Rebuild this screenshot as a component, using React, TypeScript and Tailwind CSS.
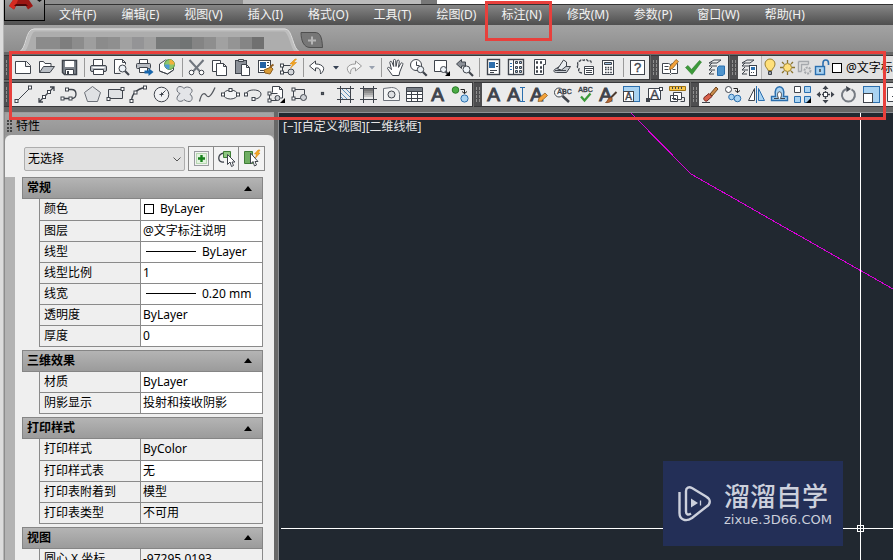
import type { ReactNode } from "react";

const INK = "#3f444c";
const BLUE = "#2b6fae";
const SKY = "#a9d3f2";

const Letter = ({ x = 10.5, y = 17, size = 19, children }: { x?: number; y?: number; size?: number; children: string }) => (
  <text
    x={x}
    y={y}
    fontSize={size}
    textAnchor="middle"
    fontFamily="'Liberation Sans', sans-serif"
    fill={INK}
    stroke={INK}
    strokeWidth={size > 14 ? 1 : 0.4}
  >
    {children}
  </text>
);

const Node = ({ x, y }: { x: number; y: number }) => (
  <rect x={x - 1.5} y={y - 1.5} width="3" height="3" fill="#fff" />
);

const Lens = ({ x, y, r = 3.5 }: { x: number; y: number; r?: number }) => (
  <>
    <path d={`M${x + r - 1} ${y + r - 1}l4 4`} strokeWidth="2.2" />
    <circle cx={x} cy={y} r={r} fill="#eef3f8" />
  </>
);

const Corner = () => <path d="M19 14v5h-5z" fill="#000" stroke="none" />;

const Layers = () => (
  <path d="M8 3h7l-4 3H3zM3 9l3-3M3 9h8M3 13l3-3M3 13h6M3 17l3-3M3 17h5" fill="none" />
);

const icons: Record<string, ReactNode> = {
  New: <path d="M2.500 4.500h11l4 4v8h-15zM12.500 4.500v5h5" fill="#fff" />,
  Open: (
    <>
      <path d="M3.500 15.500v-11h4l1.500 2h6v3" fill="#fff" />
      <path d="M3.500 15.500l4-6h11l-4.500 6z" fill="#b9bec5" />
    </>
  ),
  Save: (
    <>
      <path d="M3.500 3.500h14v14h-12l-2-2z" fill="#7e848c" strokeWidth="1.500" />
      <path d="M6 4h9v6H6z" fill="#fff" stroke="none" />
      <path d="M6.500 12.500h8v5h-8z" fill="#fff" />
      <path d="M8 14h2v3H8z" fill={INK} stroke="none" />
    </>
  ),
  Plot: (
    <>
      <path d="M5.500 8.500v-6h9v6" fill="#fff" />
      <rect x="2.500" y="8.500" width="16" height="6" rx="1.500" fill="#b9bdc3" />
      <path d="M5.500 12.500h10v5h-10z" fill="#fff" />
      <path d="M4.500 10.500h12" stroke="#fff" />
    </>
  ),
  Preview: (
    <>
      <path d="M3.500 16.500v-14h8l3 3v2M3.500 16.500h6M11.500 2.500v3h3" fill="#fff" />
      <Lens x={11.500} y={11.500} />
    </>
  ),
  Publish: (
    <>
      <path d="M5.500 6.500v-4h8v4" fill="#fff" />
      <rect x="2.500" y="6.500" width="14" height="5" rx="1" fill="#b9bdc3" />
      <path d="M5.500 10.500h8v5h-8z" fill="#fff" />
      <path d="M10.500 13.500h4v-2.500l5 4-5 4v-2.500h-4z" fill="#1665ab" stroke="none" />
    </>
  ),
  "3D DWF": (
    <>
      <path d="M2.500 7l6-4 8 2v8l-6 4-8-3z" fill="#fff" />
      <circle cx="12.500" cy="7.500" r="5" fill="#8fc66a" stroke="#57924a" />
      <path d="M12.500 2.500a5 5 0 0 1 5 5h-5z" fill="#f2b13b" stroke="none" />
      <path d="M7.500 7.500a5 5 0 0 0 5 5v-5z" fill="#4c9bd5" stroke="none" />
      <path d="M2.500 7v7l8 3 6-4v-2" fill="none" />
    </>
  ),
  Cut: (
    <>
      <path d="M3.500 3l10 11M17.500 3l-10 11" strokeWidth="2" stroke="#70767e" />
      <circle cx="5.500" cy="15.500" r="2.300" fill="#fff" />
      <circle cx="15.500" cy="15.500" r="2.300" fill="#fff" />
    </>
  ),
  Copy: (
    <>
      <path d="M3.500 3.500h8v11h-8z" fill="#fff" />
      <path d="M7.500 6.500h7l3 3v9h-10zM14.500 6.500v3h3" fill="#fff" />
    </>
  ),
  Paste: (
    <>
      <rect x="3.500" y="3.500" width="11" height="13" fill="#8b9098" />
      <path d="M6.500 2.500h5v2h-5z" fill="#d9dce0" />
      <path d="M9.500 7.500h5l3 3v8h-8zM14.500 7.500v3h3" fill="#fff" />
    </>
  ),
  "Match Properties": (
    <>
      <rect x="3.500" y="3.500" width="12" height="12" fill="#fff" />
      <path d="M5 5h6v6H5z" fill="#2362a5" stroke="none" />
      <path d="M12 5.500h2M12 8.500h2M5 13.500h4" />
      <path d="M9 13l7-3 2 2-3 5-5-1z" fill="#d99b35" stroke="#8f5f22" />
      <path d="M15 10l3.500-2.500" stroke="#8f5f22" strokeWidth="2" />
    </>
  ),
  "Block Editor": (
    <>
      <path d="M12.500 8.500h-8v7h8" fill="none" />
      <Node x={4} y={8.500} />
      <Node x={4} y={15.500} />
      <circle cx="13" cy="15" r="3" fill="#d4d7db" />
      <path d="M17 2l-5 5h3L12.500 11l6-5.500h-3l3-3.500z" fill="#f7a823" stroke="#d8860c" strokeWidth=".6" />
    </>
  ),
  Undo: <path d="M8.500 4l-6 5 6 5v-3c4-.5 5 1.500 5 6 6-5 3-10-5-10z" fill="#fff" />,
  Redo: <path d="M12.500 4l6 5-6 5v-3c-4-.5-5 1.500-5 6-6-5-3-10 5-10z" fill="#f5f5f5" stroke="#999" />,
  Pan: (
    <path
      d="M7.500 18.500L2.500 11.500c0-1.500 1.500-1.500 2.500-.3l1.500 1.500L4.800 5.500c0-1.500 1.800-1.500 2.200 0l1.700 4-.2-6c0-1.400 2-1.400 2.200 0l.3 6 1.200-5.500c.4-1.400 2.200-1 2.100.4l-.8 6 2.300-4c.8-1.200 2.500-.3 2 1l-3 7.500-.8 3.600z"
      fill="#fff"
    />
  ),
  "Zoom Realtime": (
    <>
      <circle cx="8" cy="8" r="5.500" fill="#fff" />
      <path d="M8.500 4.500v4h3" fill="none" />
      <Lens x={12.500} y={12.500} r={3.200} />
    </>
  ),
  "Zoom Window": (
    <>
      <path d="M3.500 3.500h12v11h-12z" fill="#fff" />
      <Lens x={12.500} y={12.500} r={3} />
      <Corner />
    </>
  ),
  "Zoom Previous": (
    <>
      <path d="M7.500 2.500l-5 4.500 5 4.500v-2.500h4v-4h-4z" fill="#8b9098" />
      <Lens x={12.500} y={12.500} r={3.500} />
    </>
  ),
  Properties: (
    <>
      <rect x="4.500" y="2.500" width="12" height="15" fill="#fff" strokeWidth="1.400" />
      <path d="M6 5h6v6H6z" fill="#2f6fad" stroke="none" />
      <path d="M13 6.500h2M13 9.500h2M7 13.500h7M7 15.500h4" />
    </>
  ),
  DesignCenter: (
    <>
      <rect x="2.500" y="2.500" width="15" height="15" fill="#fff" strokeWidth="1.400" />
      <path d="M7.500 3v14" />
      <path d="M4 6.500h2M4 9.500h2M4 12.500h2" stroke={BLUE} />
      <path d="M9.500 4.500h2v2h-2zM13.500 4.500h2v2h-2zM9.500 9.500h2v2h-2zM13.500 9.500h2v2h-2zM9.500 13.500h2v2h-2zM13.500 13.500h2v2h-2z" fill="#9fc3e2" />
    </>
  ),
  "Tool Palettes": (
    <>
      <path d="M5.500 2.500h11v5h-2v10h-9z" fill="#fff" />
      <path d="M7.500 4.500h1v2h-1zM11.500 4.500h1v2h-1zM7.500 9.500h1v2h-1zM11.500 9.500h1v2h-1zM7.500 13.500h1v2h-1zM11.500 13.500h1v2h-1z" fill="#ddd" />
    </>
  ),
  "Sheet Set": (
    <>
      <path d="M2.500 12.500l5-3h11l-4 6h-10c-3 0-3-2-2-3z" fill="#c9cdd2" />
      <path d="M5.500 12l6-9 3 2v4l-5 4z" fill="#e9ecef" />
      <path d="M3 13.500h11" />
    </>
  ),
  Markup: (
    <>
      <path
        d="M3 8c-1-2 0-4 2-4 1-2 3-1 4-.5 1-1.500 3-1 4 .5 2-1 4 .5 3 3M3 8c-1.500 2 0 4 1 4-1 2 0 4 3 4"
        fill="none"
        strokeDasharray="3 1"
        strokeWidth="1.300"
      />
      <path d="M9.500 9.500h9v8h-9z" fill="#fff" />
      <path d="M9.500 11.500h9M11 13.500h6M11 15.500h6" />
    </>
  ),
  QuickCalc: (
    <>
      <rect x="4.500" y="3.500" width="11" height="14" fill="#fff" />
      <path d="M6.500 5.500h7v2h-7z" fill="#9fc3e2" />
      <path d="M7 10.500h7M7 12.500h7M7 15.500h7" strokeDasharray="1.600 1" strokeWidth="1.300" />
    </>
  ),
  Help: (
    <>
      <rect x="3.500" y="3.500" width="14" height="14" fill="#fff" />
      <Letter y={15} size={13}>?</Letter>
    </>
  ),
  "Block Attributes": (
    <>
      <path d="M2.500 6.500h6l2 1 2-1h5v10h-6l-1 1-1-1h-7zM10.500 8v8M4.500 9.500h4M4.500 12.500h4M12.500 12.500h3" fill="#fff" />
      <path d="M10 9.500l6-7 2.500 2-6 7-3 1z" fill="#f5a33a" stroke="#8f5f22" strokeWidth=".8" />
    </>
  ),
  Apply: <path d="M2.500 10.500L5 8.500l3.500 4L16.500 3.500l2 1.500L9 17.500z" fill="#3c9a3a" stroke="#2b7a2b" strokeWidth=".6" />,
  "Layer States": (
    <>
      <Layers />
      <path d="M11.500 10.500l1.500-1.500h5.500v8l-1.500 1.500h-5.500z" fill="#4e94cd" stroke={BLUE} />
    </>
  ),
  "Layer Manager": (
    <>
      <Layers />
      <rect x="10.500" y="8.500" width="7" height="10" fill="#fff" />
      <path d="M12 10h4v3h-4z" fill={BLUE} stroke="none" />
      <path d="M12 15.500h4" strokeDasharray="1 1" />
    </>
  ),
  Line: (
    <>
      <path d="M4 17L17 4" />
      <Node x={3.500} y={17} />
      <Node x={17} y={3.500} />
    </>
  ),
  "Construction Line": (
    <>
      <path d="M3 18L18 3M14 3h4v4M3 14v4h4" fill="none" strokeWidth="1.300" />
      <Node x={8} y={13} />
      <Node x={13} y={8} />
    </>
  ),
  Polyline: (
    <>
      <path d="M3.500 14.500h9c6 0 6-9 0-9H9" fill="none" strokeWidth="1.300" />
      <Node x={3.500} y={14.500} />
      <Node x={11.500} y={14.500} />
      <Node x={8} y={5.500} />
    </>
  ),
  Polygon: <path d="M10.500 2.500l8 6-3 9h-10l-3-9z" fill="#dfe1e4" stroke="#6b7078" />,
  Rectangle: (
    <>
      <path d="M3.500 5.500h14v9h-14z" fill="#dfe1e4" />
      <Node x={3.500} y={15} />
      <Node x={17.500} y={5} />
    </>
  ),
  Arc: (
    <>
      <path d="M3.500 17C4 9 9 5 17 3.500" fill="none" strokeWidth="1.300" />
      <Node x={3.500} y={17} />
      <Node x={7.500} y={8.500} />
      <Node x={17} y={3.500} />
    </>
  ),
  Circle: (
    <>
      <circle cx="10.500" cy="10.500" r="7.300" fill="#f1f2f4" />
      <path d="M10.500 10.500l4-4M8.500 10.500h4M10.500 8.500v4" />
    </>
  ),
  "Revision Cloud": (
    <path
      d="M6 9.500c-4-1-4-7 0-7 2 0 3 1 4 2 2-3 9-1 8 3-1 2-2 2-2 3 3 1 3 7-1 7-2 0-4-1-5-2-2 3-7 2-7-1 0-2 1-3 3-5z"
      fill="#e3e5e8"
      stroke="#6b7078"
    />
  ),
  Spline: <path d="M2.500 17.500c2-9 5-9 7-6s5 0 8.500-8" fill="none" stroke="#55595f" strokeWidth="1.300" />,
  Ellipse: (
    <>
      <ellipse cx="10.500" cy="10.500" rx="7" ry="4.500" fill="#f3f4f5" />
      <Node x={3} y={10.500} />
      <Node x={18} y={10.500} />
      <Node x={10.500} y={6} />
    </>
  ),
  "Ellipse Arc": (
    <>
      <path d="M3 10.500c0-6 15-6 15-.5 0 3-3 5-7 5" fill="none" />
      <Node x={3} y={10.500} />
      <Node x={10.500} y={15} />
    </>
  ),
  "Insert Block": (
    <>
      <path d="M6.500 8.500v-6h7l3 3V14h-2M13.500 2.500v3h3" fill="#fff" />
      <path d="M11.500 9.500h-8v7h8" fill="none" />
      <Node x={3.500} y={9.500} />
      <Node x={3.500} y={16.500} />
      <circle cx="11.500" cy="14" r="2.500" fill="#cfd2d6" />
      <Corner />
    </>
  ),
  "Make Block": (
    <>
      <path d="M15.500 10.500v-5h-11v9h7" fill="none" />
      <Node x={4.500} y={5.500} />
      <Node x={4.500} y={14.500} />
      <circle cx="14.500" cy="13.500" r="3" fill="#cfd2d6" />
    </>
  ),
  Point: <rect x="9.500" y="8.500" width="2" height="2" fill="#fff" strokeWidth="1.200" />,
  Hatch: (
    <>
      <path d="M5.500 2v17M15.500 2v17M2 4.500h17M2 15.500h17" />
      <path d="M6 9l6 6M6 13l2 2M7 5l8 8M11 5l4 4" stroke="#4e88b5" strokeWidth=".9" />
    </>
  ),
  Gradient: (
    <>
      <path d="M6 5h9v2H6z" fill="#777" stroke="none" />
      <path d="M6 7h9v2H6z" fill="#8e8e8e" stroke="none" />
      <path d="M6 9h9v2H6z" fill="#a8a8a8" stroke="none" />
      <path d="M6 11h9v2H6z" fill="#c4c4c4" stroke="none" />
      <path d="M5.500 2v17M15.500 2v17M2 4.500h17M2 15.500h17" fill="none" />
    </>
  ),
  Region: (
    <>
      <path d="M2.500 4.500l8-1c5 0 8 3 8 7v6h-16z" fill="#f3f4f5" stroke="#6b7078" />
      <circle cx="10.500" cy="10.500" r="3.500" fill="#dfe1e4" />
    </>
  ),
  Table: (
    <>
      <path d="M2.500 3.500h16v14h-16z" fill="#fff" />
      <path d="M3 4h15v3H3z" fill="#777d85" stroke="none" />
      <path d="M2.500 7.500h16M2.500 10.500h16M2.500 14.500h16M7.500 7v10M13.500 7v10" />
    </>
  ),
  "Multiline Text": <Letter>A</Letter>,
  "Add Selected": (
    <>
      <circle cx="5.500" cy="6" r="3.300" fill="#4bab45" stroke="#2a7d28" />
      <circle cx="14.500" cy="14.500" r="3.600" fill={SKY} stroke={BLUE} />
      <path d="M10.500 5.500h4v4M12 7.500l2.500 2 2.500-2" fill="none" stroke="#222" />
    </>
  ),
  "Single Line Text": (
    <>
      <Letter x={7.500}>A</Letter>
      <path d="M14 3.500h5M14 17.500h5M16.500 3.500v14" stroke={BLUE} />
    </>
  ),
  "Edit Text": (
    <>
      <Letter x={7.500}>A</Letter>
      <path d="M9 17.500l1-3.500 6-5 2.500 2.500-6 5.500z" fill="#f5a33a" stroke="#8f5f22" strokeWidth=".8" />
    </>
  ),
  "Find Text": (
    <>
      <circle cx="7" cy="8.500" r="4.500" fill="#f5f7f9" />
      <path d="M10.500 12l6.500 6" strokeWidth="2.500" />
      <Letter x={12.500} y={10} size={7}>ABC</Letter>
    </>
  ),
  "Spell Check": (
    <>
      <Letter y={8} size={7}>ABC</Letter>
      <path d="M6 12.500l3.500 4 6-7" fill="none" stroke="#3c9a3a" strokeWidth="2.300" />
    </>
  ),
  "Text Style": (
    <>
      <Letter x={7.500}>A</Letter>
      <path d="M12.500 14l6-6" strokeWidth="2" stroke="#4c3b30" />
      <path d="M7.500 18.500c2 0 2-5 5.500-5 3 1 0 6-5.500 5z" fill="#b86b36" stroke="#7b4420" strokeWidth=".8" />
    </>
  ),
  "Scale Text": (
    <>
      <rect x="2.500" y="2.500" width="16" height="15" fill={SKY} stroke={BLUE} />
      <rect x="2.500" y="7.500" width="10" height="10" fill="#fff" />
      <Letter x={7.500} y={16} size={10}>A</Letter>
    </>
  ),
  "Justify Text": (
    <>
      <path d="M4.500 4.500h12v11h-12z" fill="#fff" />
      <Letter y={15} size={13}>A</Letter>
      <Node x={17} y={5} />
      <path d="M2 14h4v4H2z" fill={INK} stroke="none" />
    </>
  ),
  "Convert Space": (
    <>
      <path d="M2.500 2.500h16v4h-16z" fill="#f7c64b" stroke="#a07311" />
      <path d="M5.500 3v2M8.500 3v2M11.500 3v2M14.500 3v2" />
      <path d="M6.500 8.500h8v7h-8zM3.500 11.500h7v6h-7z" fill="#fff" />
      <path d="M5 14.500h4M14.500 13.500h3v4h-4" fill="none" />
    </>
  ),
  Erase: (
    <>
      <path d="M10 10l6-7 2 2-6 7z" fill="#c98a4a" stroke="#70451d" />
      <path d="M4 13.500l5-4 3 3-5 4.500c-2 1-4-2-3-3.500z" fill="#d75f4a" stroke="#70251d" />
      <path d="M2 18.500h8" />
    </>
  ),
  "Copy Object": (
    <>
      <circle cx="5.500" cy="5.500" r="3" fill="#fff" />
      <circle cx="8.500" cy="13" r="2.800" fill={SKY} stroke={BLUE} />
      <circle cx="14.500" cy="14.500" r="3.300" fill={SKY} stroke={BLUE} />
      <path d="M10.500 4.500h4v4M12 6.500l2.500 2 2.500-2" fill="none" stroke="#222" />
    </>
  ),
  Mirror: (
    <>
      <path d="M8.500 4.500v12h-6z" fill="#fff" />
      <path d="M12.500 4.500v12h6z" fill={SKY} stroke={BLUE} />
      <path d="M10.500 2v17" stroke={BLUE} />
    </>
  ),
  Offset: (
    <>
      <path d="M2.500 16.500v-4h4c-3-13 11-13 8 0h4v4z" fill={SKY} stroke={BLUE} strokeWidth="1.400" />
      <path d="M5 14.500h4.500c-4-9 6-9 2 0H16" fill="#fff" />
    </>
  ),
  Array: (
    <>
      <path d="M2.500 2.500h6v6h-6z" fill="#fff" />
      <path d="M12.500 2.500h6v6h-6zM2.500 12.500h6v6h-6zM12.500 12.500h6v6h-6z" fill={SKY} stroke={BLUE} />
      <Corner />
    </>
  ),
  Move: (
    <>
      <path d="M10.500 4v13M4 10.500h13" strokeDasharray="2 1" strokeWidth="1.500" />
      <path d="M10.500 1.500l3 3.500h-6zM10.500 19.500l3-3.500h-6zM1.500 10.500l3.500-3v6zM19.500 10.500l-3.500-3v6z" fill={INK} stroke="none" />
      <rect x="8.500" y="8.500" width="4" height="4" fill="#fff" />
    </>
  ),
  Rotate: (
    <>
      <path d="M8 5a6.500 6.500 0 1 0 5.500.3" fill="none" stroke="#767b82" strokeWidth="2" />
      <path d="M8 2l5 3-4.500 3z" fill={INK} stroke="none" />
    </>
  ),
  Scale: (
    <>
      <rect x="2.500" y="2.500" width="16" height="16" fill={SKY} stroke={BLUE} />
      <rect x="2.500" y="9.500" width="9" height="9" fill="#fff" />
    </>
  ),
  Stretch: <path d="M3.500 3.500h13v14h-13zM8 12.500h8" fill="#fff" />,
  "Layer On": (
    <>
      <path d="M8 13.500c0-2-3-3-3-6.500a5 5 0 0 1 10 0c0 3.500-3 4.500-3 6.500z" fill="#ffe07a" stroke="#9c8030" />
      <path d="M8.500 14.500h3v3h-3z" fill="#9aa0a8" />
    </>
  ),
  Thaw: (
    <>
      <path
        d="M10.500 3v3M10.500 15v3M3 10.500h3M15 10.500h3M5 5l2 2M14 14l2 2M5 16l2-2M14 7l2-2"
        stroke="#8b7530"
        strokeWidth="1.300"
      />
      <circle cx="10.500" cy="10.500" r="4" fill="#ffe07a" stroke="#9c8030" />
    </>
  ),
  "Viewport Freeze": (
    <>
      <path d="M4.500 4.500h10v3M4.500 4.500v10h3M7.500 14.500v-7h7" fill="none" stroke="#a5a8ac" strokeWidth="1.400" />
      <circle cx="13.500" cy="13.500" r="3" fill="#ddd" stroke="#a5a8ac" strokeDasharray="2 1" strokeWidth="2" />
    </>
  ),
  Unlock: (
    <>
      <path d="M12 9.500V6c0-4 5.500-4 5.500 0v2" fill="none" stroke={BLUE} strokeWidth="1.600" />
      <rect x="4.500" y="9.500" width="9" height="8" fill={SKY} stroke={BLUE} strokeWidth="1.400" />
      <path d="M9 12v3" strokeWidth="1.500" />
    </>
  ),
  "Toggle PickAdd": (
    <>
      <rect x="3.500" y="3.500" width="14" height="14" fill="none" strokeDasharray="1 1" />
      <path d="M5.500 5.500h10v10h-10z" fill="#e2f3df" stroke="#83bb7b" strokeDasharray="1 1" />
      <path d="M10.500 7v7M7 10.500h7" stroke="#16811b" strokeWidth="2.400" />
    </>
  ),
  "Select Objects": (
    <>
      <path d="M8 5c-7 1-7 10 0 9" fill="none" strokeWidth="1.300" />
      <path d="M7.500 3.500h7v6h-7z" fill="#8dc67f" stroke="#3e7d35" />
      <path d="M11.500 6.500v10l2.500-2.500 1.500 4.500 2-1-1.500-3.500h3z" fill="#fff" />
    </>
  ),
  "Quick Select": (
    <>
      <path d="M3.500 3.500h8v12h-8z" fill="#6fae62" stroke="#3e7d35" />
      <path d="M9.500 5v11l2.500-2.500 1.500 4.500 2-1-1.500-3.500h3z" fill="#fff" />
      <path d="M17 2l-3.500 4h2l-1 4 4.500-5h-2l2-3z" fill="#f7a823" stroke="#d8860c" strokeWidth=".6" />
    </>
  ),
};

const Icon = ({ name }: { name: string }) => (
  <svg viewBox="1 1 19 19" className="size-[19px] shrink-0 overflow-visible" stroke={INK} aria-hidden="true">
    {icons[name]}
  </svg>
);

const Tool = ({ name }: { name: string }) => (
  <button aria-label={name} className="flex w-[23px] shrink-0 items-center justify-center hover:bg-sky-100">
    <Icon name={name} />
  </button>
);

const Drop = ({ name, muted }: { name: string; muted?: boolean }) => (
  <button aria-label={name} className="flex w-[13px] shrink-0 items-center justify-center">
    <svg viewBox="0 0 6 4" className={muted ? "h-1 w-1.5 text-gray-400" : "h-1 w-1.5 text-gray-700"}>
      <path d="M0 0h6L3 3.500z" fill="currentColor" />
    </svg>
  </button>
);

const Separator = () => (
  <div className="flex w-[6px] shrink-0 justify-center py-0.5">
    <div className="w-px bg-[#9a9a9a]" />
  </div>
);

const Grip = () => (
  <div className="flex w-2 shrink-0 items-center justify-center gap-0.5 bg-[#4e4e50] py-1">
    <div className="h-full border-l border-dashed border-[#8f8f8f]" />
    <div className="h-full border-l border-dashed border-[#8f8f8f]" />
  </div>
);

const Toolbar = ({ items, grow, children }: { items: string[]; grow?: boolean; children?: ReactNode }) => (
  <div
    className={
      grow
        ? "flex min-w-0 flex-1 border-y border-[#38383a] bg-[#ebebeb]"
        : "flex shrink-0 border border-l-0 border-[#38383a] bg-[#ebebeb]"
    }
  >
    <Grip />
    {items.map((item, i) => {
      if (item === "|") return <Separator key={i} />;
      if (item === "v") return <Drop key={i} name={items[i - 1] + " list"} muted={items[i - 1] === "Redo"} />;
      return <Tool key={i} name={item} />;
    })}
    {children}
  </div>
);

const standard = [
  "New", "Open", "Save", "|", "Plot", "Preview", "Publish", "3D DWF", "|",
  "Cut", "Copy", "Paste", "Match Properties", "Block Editor", "|",
  "Undo", "v", "Redo", "v", "|",
  "Pan", "Zoom Realtime", "Zoom Window", "Zoom Previous", "|",
  "Properties", "DesignCenter", "Tool Palettes", "Sheet Set", "Markup", "QuickCalc", "|", "Help",
];

const draw = [
  "Line", "Construction Line", "Polyline", "Polygon", "Rectangle", "Arc", "Circle",
  "Revision Cloud", "Spline", "Ellipse", "Ellipse Arc", "Insert Block", "Make Block", "Point",
  "Hatch", "Gradient", "Region", "Table", "Multiline Text", "Add Selected",
];

const text = [
  "Multiline Text", "Single Line Text", "Edit Text", "Find Text", "Spell Check",
  "Text Style", "Scale Text", "Justify Text", "Convert Space",
];

const modify = ["Erase", "Copy Object", "Mirror", "Offset", "Array", "Move", "Rotate", "Scale", "Stretch"];

const menus = [
  "文件(F)", "编辑(E)", "视图(V)", "插入(I)", "格式(O)", "工具(T)",
  "绘图(D)", "标注(N)", "修改(M)", "参数(P)", "窗口(W)", "帮助(H)",
];

type Row = { label: string; value: string; kind?: "color" | "line" | "readonly" };

const sections: { title: string; rows: Row[] }[] = [
  {
    title: "常规",
    rows: [
      { label: "颜色", value: "ByLayer", kind: "color" },
      { label: "图层", value: "@文字标注说明" },
      { label: "线型", value: "ByLayer", kind: "line" },
      { label: "线型比例", value: "1" },
      { label: "线宽", value: "0.20 mm", kind: "line" },
      { label: "透明度", value: "ByLayer" },
      { label: "厚度", value: "0" },
    ],
  },
  {
    title: "三维效果",
    rows: [
      { label: "材质", value: "ByLayer" },
      { label: "阴影显示", value: "投射和接收阴影" },
    ],
  },
  {
    title: "打印样式",
    rows: [
      { label: "打印样式", value: "ByColor", kind: "readonly" },
      { label: "打印样式表", value: "无" },
      { label: "打印表附着到", value: "模型", kind: "readonly" },
      { label: "打印表类型", value: "不可用", kind: "readonly" },
    ],
  },
  {
    title: "视图",
    rows: [{ label: "圆心 X 坐标", value: "-97295.0193", kind: "readonly" }],
  },
];

const Section = ({ title, rows }: { title: string; rows: Row[] }) => (
  <section className="mb-[3px]">
    <h3>
      <button className="flex h-[22px] w-full items-center justify-between border border-[#858585] bg-linear-to-b from-[#b4b4b4] to-[#9b9b9b] pr-2.5 pl-1 font-bold">
        {title}
        <svg viewBox="0 0 8 5" className="h-[5px] w-2" aria-hidden="true">
          <path d="M4 0l4 5H0z" />
        </svg>
      </button>
    </h3>
    <div className="pl-[17px]">
      <table className="w-full table-fixed border-x border-[#8a8a8a]">
        <tbody>
          {rows.map((row) => (
            <tr key={row.label} className="h-[21px] border-b border-[#8a8a8a]">
              <th className="w-[101px] border-r border-[#8a8a8a] py-0 pl-1 text-left font-normal whitespace-nowrap">
                {row.label}
              </th>
              <td className={row.kind === "readonly" ? "px-0.5 whitespace-nowrap" : "bg-white px-0.5 whitespace-nowrap"}>
                <div className="flex items-center">
                  {row.kind === "color" && <span className="mr-1.5 ml-px size-2.5 border border-black" />}
                  {row.kind === "line" && <span className="mr-1.5 ml-[3px] h-px w-[50px] bg-black" />}
                  {row.value}
                </div>
              </td>
            </tr>
          ))}
        </tbody>
      </table>
    </div>
  </section>
);

const Palette = () => (
  <aside className="flex w-[270px] shrink-0 flex-col overflow-hidden border-l border-[#8c8c8c] bg-[#9b9b9b] pt-px text-xs leading-4">
    <div className="flex h-[22px] shrink-0 items-center rounded-t bg-linear-to-b from-[#a5a5a5] to-[#949494] pt-1">
      <div className="mr-1 ml-0.5 flex h-3 gap-px">
        <div className="border-l-2 border-dotted border-[#444]" />
        <div className="border-l-2 border-dotted border-[#444]" />
      </div>
      <h2>特性</h2>
    </div>
    <div className="flex min-h-0 flex-1 flex-col rounded-t-md bg-[#efefef]">
      <div className="flex shrink-0 items-center gap-[3px] pt-[11px] pr-[9px] pb-1.5 pl-[19px]">
        <div className="relative min-w-0 flex-1">
          <select
            aria-label="特性"
            className="h-6 w-full appearance-none rounded-xs border border-[#adadad] bg-[#e1e1e1] pl-[3px]"
          >
            <option>无选择</option>
          </select>
          <svg viewBox="0 0 8 5" className="pointer-events-none absolute top-[10px] right-1 h-[5px] w-2" aria-hidden="true">
            <path d="M.5.500L4 4 7.500.500" fill="none" stroke="#555" />
          </svg>
        </div>
        <div className="flex h-[25px] divide-x divide-[#8a8a8a] border border-[#8a8a8a] bg-[#f3f3f3]">
          {["Toggle PickAdd", "Select Objects", "Quick Select"].map((name) => (
            <button key={name} aria-label={name} className="flex w-[25px] items-center justify-center">
              <Icon name={name} />
            </button>
          ))}
        </div>
      </div>
      <div className="flex min-h-0 flex-1">
        <div className="w-2.5 shrink-0 bg-[#b3b3b3]" />
        <div className="min-w-0 flex-1 overflow-hidden pr-[11px] pl-[7px]">
          {sections.map((section) => (
            <Section key={section.title} {...section} />
          ))}
        </div>
      </div>
    </div>
  </aside>
);

const Watermark = () => (
  <div className="absolute right-[50px] bottom-3.5 flex h-[85px] w-[180px] items-center gap-3 bg-[#232f57] pl-[15px] text-[#ccd0dc]">
    <svg viewBox="0 0 34 36" className="h-9 w-[34px] shrink-0" fill="none" stroke="currentColor" aria-hidden="true">
      <path
        d="M13 27.500c-3 2-5 1-5-2V5c0-3.500 3-4.500 6-3l14 8.500c5 3 5 7.500 0 10.500L14 32c-6 4-12.500 2-12.500-5V6"
        strokeWidth="2.400"
      />
      <path d="M13 12.500l7 4.500-7 4.500z" fill="currentColor" stroke="none" />
      <path d="M22.500 14.500v5" strokeWidth="1.300" />
    </svg>
    <div className="whitespace-nowrap">
      <p className="text-[26px] leading-8 font-medium">溜溜自学</p>
      <p className="font-['DejaVu_Sans',sans-serif] text-[13px] leading-4">zixue.3D66.COM</p>
    </div>
  </div>
);

const DrawingArea = () => (
  <main className="relative ml-1 min-w-0 flex-1 overflow-hidden border-t border-l border-[#8d9094] bg-[#212830]">
    <svg className="absolute inset-0 h-full w-full" fill="none" shapeRendering="crispEdges" aria-hidden="true">
      <path d="M352 0L412 61L614 176L640 191" stroke="#d800d8" />
      <path d="M2 415.500H578M585 415.500H1600M581.500 0V412M581.500 419V1200" stroke="#fff" />
      <path d="M578.500 412.500h6v6h-6zM578 415.500h7M581.500 412v7" stroke="#fff" />
    </svg>
    <p className="relative pt-1.5 pl-1 text-xs leading-4 text-[#e6e6e6]">[−][自定义视图][二维线框]</p>
    <Watermark />
  </main>
);

// greyed out file name on the active tab
const tabBlocks = [
  "bg-[#8b8b8b]", "bg-[#8b8b8b]", "bg-[#7e7e7e]", "bg-[#8c8c8c]", "bg-[#9e9e9e]", "bg-[#8b8b8b]", "bg-[#8f8f8f]",
  "bg-[#a1a1a1]", "bg-[#949496]", "bg-[#a0a0a0]", "bg-[#777979]", "bg-[#777979]", "bg-[#717474]", "bg-[#848484]",
  "bg-[#8e8e8e]", "bg-[#a1a1a1]", "bg-[#949494]", "bg-[#858585]", "bg-[#707070]",
];

const App = () => {
  return (
    <div className="flex h-screen overflow-hidden bg-[#dcdcdc] font-['Noto_Sans','Noto_Sans_CJK_SC',sans-serif] text-black">
      <div className="w-1 shrink-0 border-r border-[#b5b5b5]" />
      <div className="relative flex min-w-0 flex-1 flex-col bg-[#686868]">
        <div className="flex h-1 shrink-0 bg-white">
          <div className="w-[239px] bg-[#8e8e8e]" />
          <div className="w-[178px] bg-[#bcbcbc]" />
          <div className="w-4 bg-[#777]" />
        </div>
        <button
          aria-label="Application menu"
          className="absolute top-0 left-0 h-[21px] w-[41px] border border-t-0 border-black bg-linear-to-b from-[#9a9a9a] to-[#696969]"
        >
          <svg viewBox="0 0 39 20" className="h-5 w-full" aria-hidden="true">
            <path d="M8 0h16l4 6-5 3.500-3-5h-8l-3 5L4 6z" fill="#9c1714" />
            <path d="M8 0L4 6l5 3.500L13 0z" fill="#d52b21" />
            <path d="M11 4h10l2 2H9z" fill="#4b0808" />
            <path d="M32 0h5l-2.500 2z" fill="#111" />
          </svg>
        </button>
        <nav className="flex h-[21px] shrink-0 items-center gap-[25px] border-t border-[#333] bg-linear-to-b from-[#868686] to-[#4f4f4f] pl-[55px] text-xs leading-4 whitespace-nowrap text-[#f2f2f2]">
          {menus.map((menu) => (
            <button key={menu}>{menu}</button>
          ))}
        </nav>
        <div className="flex h-[27px] shrink-0 items-end bg-linear-to-b from-[#a3a3a3] to-[#8d8d8d] pl-[15px]">
          <button aria-label="Drawing tab" className="relative h-6 w-[281px]">
            <svg viewBox="0 0 281 24" className="absolute inset-0 h-full w-full" aria-hidden="true">
              <path d="M0 24C8 21 6 1 15 1h251c8 0 7 20 15 23z" fill="#adadad" />
              <path d="M3 24C10 20 9 2 16 2h249c7 0 7 18 13 22" fill="none" stroke="#bebebe" strokeWidth="3" />
              <path d="M0 24C8 21 6 1 15 1h251c8 0 7 20 15 23" fill="none" stroke="#dcdcdc" />
            </svg>
            <span className="relative mt-1.5 mr-9 ml-[17px] flex h-3">
              {tabBlocks.map((block, i) => (
                <span key={i} className={`flex-1 ${block}`} />
              ))}
            </span>
          </button>
          <button aria-label="New drawing" className="mb-1 h-4 w-6">
            <svg viewBox="0 0 24 16" className="h-full w-full" aria-hidden="true">
              <path d="M1 .500h14c5 0 7 4 7.500 15H10C4 15.500 1 9 1 .500z" fill="#777" stroke="#4f4f4f" />
              <path d="M12 4.500v8M8 8.500h8" stroke="#b5b5b5" strokeWidth="2" />
            </svg>
          </button>
        </div>
        <div className="flex shrink-0 flex-col gap-0.5 pt-[3px] pb-[5px]">
          <div className="flex h-[25px] gap-px">
            <Toolbar items={standard} />
            <Toolbar items={["Block Attributes", "Apply", "Layer States"]} />
            <Toolbar items={["Layer Manager"]} grow>
              <button className="flex min-w-0 flex-1 items-center overflow-hidden border-l border-[#b5b5b5] bg-[#e1e1e1] text-xs whitespace-nowrap">
                {["Layer On", "Thaw", "Viewport Freeze", "Unlock"].map((name) => (
                  <span key={name} className="flex w-[17px] shrink-0 justify-center">
                    <Icon name={name} />
                  </span>
                ))}
                <span className="mr-1 ml-0.5 size-2.5 shrink-0 border border-black bg-white" />
                @文字标注说明
              </button>
            </Toolbar>
          </div>
          <div className="flex h-[25px] gap-px">
            <Toolbar items={draw} />
            <Toolbar items={text} />
            <Toolbar items={modify} grow />
          </div>
        </div>
        <div className="flex min-h-0 flex-1">
          <Palette />
          <DrawingArea />
        </div>
        <div className="pointer-events-none absolute top-px left-[481px] h-10 w-[67px] border-3 border-[#e8403c]" />
        <div className="pointer-events-none absolute top-[51px] right-[7px] left-[5px] h-[69px] border-3 border-[#e8403c]" />
      </div>
    </div>
  );
};

export default App;
